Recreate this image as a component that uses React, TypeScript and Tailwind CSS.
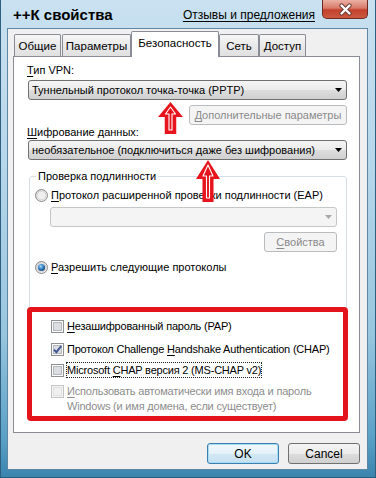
import React from "react";

function U({ children }: { children: React.ReactNode }) {
  return <span className="underline decoration-1 underline-offset-[2px]">{children}</span>;
}

function Arrow({ disabled }: { disabled?: boolean }) {
  return (
    <svg width="7" height="4" viewBox="0 0 7 4">
      <polygon points="0,0 7,0 3.5,4" fill={disabled ? "#a8a8a8" : "#000"} />
    </svg>
  );
}

function Combo({ text, disabled, cls }: { text?: string; disabled?: boolean; cls: string }) {
  return (
    <div
      className={
        "flex items-center justify-between rounded-[3px] border pl-[3px] pr-[4px] " +
        (disabled
          ? "border-[#c3c7ca] bg-[#f4f4f4] "
          : "border-[#707070] bg-[linear-gradient(180deg,#f4f4f4_0%,#ebebeb_50%,#dddddd_50%,#d0d0d0_100%)] ") +
        cls
      }
    >
      <span className="whitespace-nowrap">{text}</span>
      <Arrow disabled={disabled} />
    </div>
  );
}

function Btn({ children, disabled, primary, cls }: { children: React.ReactNode; disabled?: boolean; primary?: boolean; cls: string }) {
  return (
    <div
      className={
        "flex items-center justify-center rounded-[3px] border whitespace-nowrap " +
        (disabled
          ? "border-[#b8bcbf] bg-[#f4f4f4] text-[#8a8a8a] "
          : primary
          ? "border-[#3c7fb1] bg-[linear-gradient(180deg,#f2f8fc_0%,#e4f1f9_50%,#d3e8f5_50%,#c6e0f1_100%)] shadow-[inset_0_0_0_1px_#a8dcf5] "
          : "border-[#707070] bg-[linear-gradient(180deg,#f4f4f4_0%,#ebebeb_50%,#dddddd_50%,#d0d0d0_100%)] ") +
        cls
      }
    >
      {children}
    </div>
  );
}

function Radio({ checked, id }: { checked?: boolean; id: string }) {
  return (
    <svg width="13" height="13" viewBox="0 0 13 13" className="shrink-0">
      <defs>
        <linearGradient id={id + "o"} x1="0" y1="0" x2="1" y2="1">
          <stop offset="0" stopColor="#d6d6d6" />
          <stop offset="1" stopColor="#fafafa" />
        </linearGradient>
        <radialGradient id={id + "d"} cx="0.4" cy="0.35" r="0.7">
          <stop offset="0" stopColor="#b4dcf6" />
          <stop offset="0.45" stopColor="#3d8ccc" />
          <stop offset="1" stopColor="#12426e" />
        </radialGradient>
      </defs>
      <circle cx="6.5" cy="6.5" r="6" fill={`url(#${id}o)`} stroke="#8a8a8a" />
      <circle cx="6.5" cy="6.5" r="4.5" fill="#efefef" stroke="#c9c9c9" strokeWidth="0.8" />
      {checked && <circle cx="6.5" cy="6.5" r="3.6" fill={`url(#${id}d)`} />}
    </svg>
  );
}

function Check({ checked, disabled }: { checked?: boolean; disabled?: boolean }) {
  return (
    <svg width="13" height="13" viewBox="0 0 13 13" className="shrink-0">
      <rect x="0.5" y="0.5" width="12" height="12" fill={disabled ? "#f4f4f4" : "#fbfbfb"} stroke={disabled ? "#c4c4c4" : "#8e8f8f"} />
      <rect
        x="2.5"
        y="2.5"
        width="8"
        height="8"
        fill={disabled ? "#f0f0f0" : "#dadde2"}
        stroke={disabled ? "#e0e0e0" : "#b5b9be"}
      />
      {checked && (
        <path d="M3 6.6 L5.4 9.2 L10.2 3" fill="none" stroke="#3d5592" strokeWidth="1.9" />
      )}
    </svg>
  );
}

function RedArrow({ w, h, head }: { w: number; h: number; head: number }) {
  const c = w / 2;
  const s = w * 0.23;
  const outer = `${c},0 ${w},${head} ${c + s},${head} ${c + s},${h} ${c - s},${h} ${c - s},${head} 0,${head}`;
  const inner = `${c},5 ${c + 5},${head - 3} ${c + 1.5},${head - 3} ${c + 1.5},${h - 4} ${c - 1.5},${h - 4} ${c - 1.5},${head - 3} ${c - 5},${head - 3}`;
  return (
    <svg width={w} height={h} viewBox={`0 0 ${w} ${h}`}>
      <polygon points={outer} fill="#e8141d" />
      <polygon points={inner} fill="#e8141d" stroke="#ffffff" strokeWidth="1.1" strokeLinejoin="round" />
    </svg>
  );
}

export default function App() {
  return (
    <div className="relative w-[376px] h-[478px] overflow-hidden border-x border-b border-[#2d5f7f] bg-[linear-gradient(180deg,#c9e1f0_0%,#b6d6ea_35%,#98c6df_70%,#5aa0c6_92%,#3a84ae_100%)] font-['Liberation_Sans',Arial,sans-serif] text-[11px] leading-[14px] text-black">
      {/* title bar */}
      <div className="flex h-[28px] items-start">
        <div className="pl-[12px] pt-[7px] text-[15px] font-bold leading-[16px]">++К свойства</div>
        <div className="ml-auto mt-[8px] text-[12px] underline decoration-1 underline-offset-[2px]">Отзывы и предложения</div>
        <div className="ml-[7px] mr-[7px] flex h-[19px] w-[46px] items-center justify-center rounded-b-[5px] border border-t-0 border-[#6d2a22] bg-[linear-gradient(180deg,#eab1a4_0%,#d97a68_45%,#c2412d_55%,#cc5a40_100%)]">
          <svg width="15" height="13" viewBox="0 0 15 13">
            <path d="M3.5 2.5 L11.5 10.5 M11.5 2.5 L3.5 10.5" stroke="#6a3a33" strokeWidth="4.2" strokeLinecap="round" />
            <path d="M3.5 2.5 L11.5 10.5 M11.5 2.5 L3.5 10.5" stroke="#ffffff" strokeWidth="2.4" strokeLinecap="round" />
          </svg>
        </div>
      </div>

      {/* client area */}
      <div className="ml-[6px] mr-[7px] h-[442px] border border-[#5f87a3] bg-[#f0f0f0] pl-[5px] pr-[7px] pt-[2px]">
        {/* tabs */}
        <div className="flex h-[25px] items-end pl-[1px] text-[11.5px]">
          <div className="flex h-[22px] w-[47px] items-center justify-center rounded-t-[2px] border border-b-0 border-[#898c95] bg-[linear-gradient(180deg,#f7f7f7_0%,#e9e9e9_50%,#e0e0e0_100%)]">Общие</div>
          <div className="ml-[1px] flex h-[22px] w-[69px] items-center justify-center rounded-t-[2px] border border-b-0 border-[#898c95] bg-[linear-gradient(180deg,#f7f7f7_0%,#e9e9e9_50%,#e0e0e0_100%)]">Параметры</div>
          <div className="relative z-10 mb-[-1px] flex h-[26px] w-[88px] items-start justify-center rounded-t-[2px] border border-b-0 border-[#898c95] bg-white pt-[4px]">Безопасность</div>
          <div className="flex h-[22px] w-[40px] items-center justify-center rounded-t-[2px] border border-b-0 border-[#898c95] bg-[linear-gradient(180deg,#f7f7f7_0%,#e9e9e9_50%,#e0e0e0_100%)]">Сеть</div>
          <div className="flex h-[22px] w-[47px] items-center justify-center rounded-t-[2px] border border-b-0 border-[#898c95] bg-[linear-gradient(180deg,#f7f7f7_0%,#e9e9e9_50%,#e0e0e0_100%)]">Доступ</div>
        </div>

        {/* panel */}
        <div className="flex h-[377px] flex-col border border-[#898c95] bg-white pl-[13px]">
          <div className="mt-[6px]">
            <U>Т</U>ип VPN:
          </div>
          <Combo text="Туннельный протокол точка-точка (PPTP)" cls="mt-[3px] ml-[1px] h-[20px] w-[319px]" />
          <Btn disabled cls="mt-[5px] ml-[162px] h-[20px] w-[158px]">
            <U>Д</U>ополнительные параметры
          </Btn>
          <div>
            <U>Ш</U>ифрование данных:
          </div>
          <Combo text="необязательное (подключиться даже без шифрования)" cls="mt-[1px] ml-[1px] h-[20px] w-[319px]" />

          <fieldset className="mt-[9px] ml-[2px] h-[250px] w-[318px] rounded-[3px] border border-[#d5dfe5] px-[6px]">
            <legend className="px-[2px] leading-[14px]">Проверка подлинности</legend>
            <div className="mt-[5px] ml-[-1px] flex h-[14px] items-center gap-[3px]">
              <Radio id="r1" />
              <span>
                <U>П</U>ротокол расширенной проверки подлинности (EAP)
              </span>
            </div>
            <Combo disabled cls="mt-[5px] ml-[14px] h-[20px] w-[287px]" />
            <Btn disabled cls="mt-[5px] ml-[228px] h-[20px] w-[73px]">
              <U>С</U>войства
            </Btn>
            <div className="mt-[8px] ml-[-1px] flex h-[14px] items-center gap-[3px]">
              <Radio id="r2" checked />
              <span>
                <U>Р</U>азрешить следующие протоколы
              </span>
            </div>

            <div className="pl-[15px] tracking-[-0.2px]">
              <div className="mt-[45px] flex h-[14px] items-center gap-[3px]">
                <Check />
                <span>
                  <U>Н</U>езашифрованный пароль (PAP)
                </span>
              </div>
              <div className="mt-[9px] flex h-[14px] items-center gap-[3px]">
                <Check checked />
                <span className="whitespace-nowrap">
                  Протокол Challenge <U>H</U>andshake Authentication (CHAP)
                </span>
              </div>
              <div className="mt-[6px] flex h-[16px] items-center gap-[2px]">
                <Check />
                <span className="whitespace-nowrap border border-dotted border-[#222] leading-[14px]">
                  Microsoft <U>C</U>HAP версия 2 (MS-CHAP v2)
                </span>
              </div>
              <div className="mt-[6px] flex items-start gap-[3px] text-[#8d8d8d]">
                <div className="pt-[1px]">
                  <Check disabled />
                </div>
                <span className="leading-[15px]">
                  <U>И</U>спользовать автоматически имя входа и пароль
                  <br />
                  Windows (и имя домена, если существует)
                </span>
              </div>
            </div>
          </fieldset>
        </div>

        {/* buttons */}
        <div className="mt-[10px] flex justify-end gap-[9px] text-[12px]">
          <Btn primary cls="h-[21px] w-[72px]">OK</Btn>
          <Btn cls="h-[21px] w-[72px]">Cancel</Btn>
        </div>
      </div>

      {/* annotations */}
      <div className="absolute left-[26px] top-[307px] h-[114px] w-[321px] rounded-[4px] border-[5px] border-[#e3141b]" />
      <div className="absolute left-[157px] top-[102px]">
        <RedArrow w={25} h={32} head={15} />
      </div>
      <div className="absolute left-[195px] top-[160px]">
        <RedArrow w={24} h={42} head={19} />
      </div>
    </div>
  );
}
